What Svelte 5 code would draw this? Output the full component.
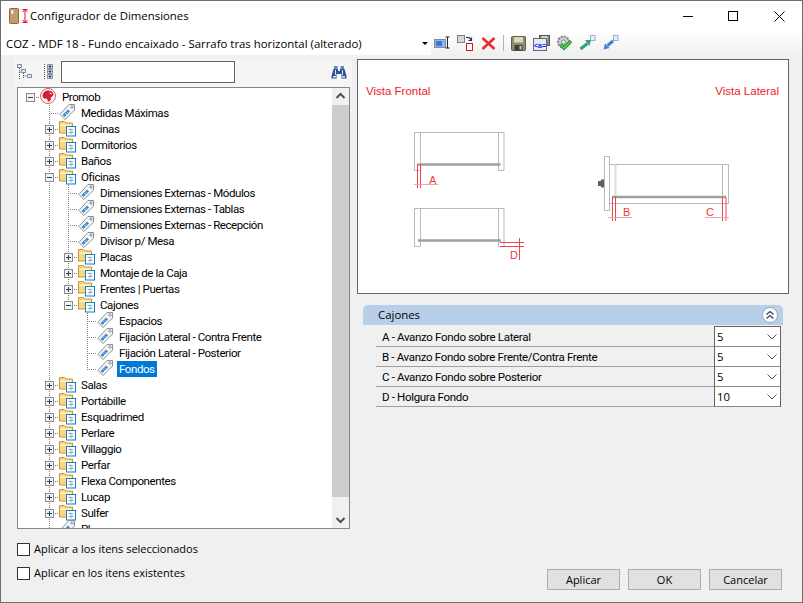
<script lang="ts">
  type Node = { label: string; kind: 'root' | 'folder' | 'tag'; open?: boolean; selected?: boolean; children?: Node[] };
  type Row = Node & { depth: number; guides: boolean[]; last: boolean; expandable: boolean };

  const folder = (label: string): Node => ({ label, kind: 'folder' });
  const tag = (label: string, selected = false): Node => ({ label, kind: 'tag', selected });

  const tree: Node = {
    label: 'Promob',
    kind: 'root',
    open: true,
    children: [
      tag('Medidas Máximas'),
      folder('Cocinas'),
      folder('Dormitorios'),
      folder('Baños'),
      {
        label: 'Oficinas',
        kind: 'folder',
        open: true,
        children: [
          tag('Dimensiones Externas - Módulos'),
          tag('Dimensiones Externas - Tablas'),
          tag('Dimensiones Externas - Recepción'),
          tag('Divisor p/ Mesa'),
          folder('Placas'),
          folder('Montaje de la Caja'),
          folder('Frentes | Puertas'),
          {
            label: 'Cajones',
            kind: 'folder',
            open: true,
            children: [
              tag('Espacios'),
              tag('Fijación Lateral - Contra Frente'),
              tag('Fijación Lateral - Posterior'),
              tag('Fondos', true)
            ]
          }
        ]
      },
      folder('Salas'),
      folder('Portábille'),
      folder('Esquadrimed'),
      folder('Perlare'),
      folder('Villaggio'),
      folder('Perfar'),
      folder('Flexa Componentes'),
      folder('Lucap'),
      folder('Sulfer'),
      tag('Pl'),
      folder('')
    ]
  };

  function flatten(node: Node, depth: number, guides: boolean[], last: boolean): Row[] {
    const row: Row = { ...node, depth, guides, last, expandable: node.kind !== 'tag' };
    const kids = node.open ? node.children ?? [] : [];
    const next = depth === 0 ? [] : [...guides, !last];
    const childGuides = depth === 0 ? [false] : next;
    return [row, ...kids.flatMap((c, i) => flatten(c, depth + 1, childGuides, i === kids.length - 1))];
  }

  // the empty last node only keeps the guide line running past the clipped row
  const rows = flatten(tree, 0, [], true).filter((r) => r.label);

  const params = [
    { label: 'A - Avanzo Fondo sobre Lateral', value: '5' },
    { label: 'B - Avanzo Fondo sobre Frente/Contra Frente', value: '5' },
    { label: 'C - Avanzo Fondo sobre Posterior', value: '5' },
    { label: 'D - Holgura Fondo', value: '10' }
  ];
</script>

{#snippet folderIcon()}
  <svg class="node-icon" width="17" height="17" viewBox="0 0 17 17">
    <path d="M.5 1.500h5l1.500 1.500h6.500v10H.5z" fill="#f9d684" stroke="#c8963f" />
    <path d="M1.500 4.500h11v1.500h-11z" fill="#fff3d2" />
    <rect x="7.500" y="6.500" width="9" height="9.500" fill="#fff" stroke="#1a7cb8" />
    <path d="M9.500 9.500h5M9.500 12.500h5M12 8.500v6" stroke="#7fb6da" fill="none" />
    <path d="M9.500 8.500h1v1h-1zM13 11h1v1h-1z" fill="#b6d6ec" />
  </svg>
{/snippet}

{#snippet tagIcon()}
  <svg class="node-icon" width="17" height="17" viewBox="0 0 17 17">
    <path d="M10 .5h5.500V6L6 15.500.9 10.400z" fill="#f6f6f6" stroke="#8f8f8f" />
    <circle cx="13" cy="3" r="1.200" fill="#fff" stroke="#8f8f8f" />
    <path d="M9 5.500l2 2-5.500 5.500-2-2z" fill="#3b86d4" />
    <path d="M6 9l2 2M7.500 7.500l2 2" stroke="#b4d6f4" fill="none" />
  </svg>
{/snippet}

{#snippet rootIcon()}
  <svg class="node-icon" width="17" height="17" viewBox="0 0 17 17">
    <circle cx="8" cy="8" r="7.500" fill="#fff" stroke="#de5560" />
    <path d="M2.500 8c0-3.500 2.500-5.500 5.500-5.500 3 0 5 1.500 5.500 4-.5 2-2 2.500-2.500 2.500 0 2-.5 3.500-1.500 4.500H7.500c.5-2-.5-3-2-3C4 10.500 2.500 10 2.500 8z" fill="#cf2233" />
    <path d="M9.500 5l2 1" stroke="#fff" fill="none" />
  </svg>
{/snippet}

<div class="window">
  <header class="titlebar">
    <svg class="app-icon" width="24" height="18" viewBox="0 0 24 18">
      <rect x=".5" y="1.500" width="9" height="15" rx="1" fill="#c49a6c" stroke="#8a6a44" />
      <rect x="2" y="3" width="2.500" height="4" fill="#efe2cf" />
      <path d="M13.500 2.500h5M16 2.500v13M13.500 15.500h5M13.500 5l2.500-2.500L18.500 5M13.500 13l2.500 2.500 2.500-2.500" stroke="#e0102a" fill="none" />
    </svg>
    <span class="title">Configurador de Dimensiones</span>
    <div class="window-btns">
      <svg width="11" height="11" viewBox="0 0 11 11"><path d="M1 5.500h10" stroke="#000" /></svg>
      <svg width="11" height="11" viewBox="0 0 11 11"><rect x=".5" y=".5" width="9" height="9" fill="none" stroke="#000" /></svg>
      <svg width="11" height="11" viewBox="0 0 11 11"><path d="M.5.500l10 10M10.500.500l-10 10" stroke="#000" fill="none" /></svg>
    </div>
  </header>

  <div class="toolbar">
    <div class="combo">
      <span>COZ - MDF 18 - Fundo encaixado - Sarrafo tras horizontal (alterado)</span>
      <i class="combo-arrow"></i>
    </div>
    <button class="tool" aria-label="Renombrar">
      <svg width="17" height="14" viewBox="0 0 17 14">
        <rect x=".5" y="3.500" width="11" height="8" fill="#8fb4ee" stroke="#7d8a9c" />
        <path d="M2 5h6v5H2z" fill="#3f74dc" />
        <path d="M11.500 1h4M13.500 1v11M11.500 12h4" stroke="#222" fill="none" />
      </svg>
    </button>
    <button class="tool" aria-label="Sustituir">
      <svg width="17" height="16" viewBox="0 0 17 16">
        <rect x=".5" y=".5" width="7" height="7" fill="#d8d8d8" stroke="#7f7f7f" />
        <rect x="9.500" y="8.500" width="6" height="7" fill="#fff" stroke="#e01020" />
        <path d="M9 2.500h3l2 2M14.500 2.500v3h-3" stroke="#14306e" fill="none" stroke-width="1.200" />
      </svg>
    </button>
    <button class="tool" aria-label="Eliminar">
      <svg width="15" height="13" viewBox="0 0 15 13">
        <path d="M1.500 1l12 11M13.500 1l-12 11" stroke="#ee2a30" stroke-width="2.600" fill="none" />
      </svg>
    </button>
    <span class="tool-sep"></span>
    <button class="tool" aria-label="Guardar">
      <svg width="15" height="15" viewBox="0 0 15 15">
        <rect x=".5" y=".5" width="14" height="14" rx="1" fill="#8d8d68" stroke="#5c5c50" />
        <rect x="3" y="1" width="9" height="5.500" fill="#d8d8c0" />
        <rect x="3.500" y="9" width="8" height="5.500" fill="#3e3e3e" />
        <rect x="8.500" y="10" width="2" height="3.500" fill="#c8c8c8" />
      </svg>
    </button>
    <button class="tool" aria-label="Guardar como">
      <svg width="17" height="16" viewBox="0 0 17 16">
        <rect x="6.500" y=".5" width="10" height="10" fill="#8a8a80" stroke="#55554e" />
        <rect x="8.500" y="1" width="6" height="3.500" fill="#d8d8c8" />
        <rect x=".5" y="3.500" width="13" height="12" fill="#e6ecf6" stroke="#5c6a80" />
        <text class="mini" x="1" y="13">&lt;a=</text>
      </svg>
    </button>
    <button class="tool" aria-label="Validar">
      <svg width="17" height="16" viewBox="0 0 17 16">
        <circle cx="7.500" cy="7" r="5.500" fill="#d0d0d0" stroke="#8a8a8a" stroke-width="2" stroke-dasharray="2.200 1" />
        <circle cx="7.500" cy="7" r="2" fill="#f0f0f0" stroke="#8a8a8a" />
        <path d="M4.500 9.500l3.500 3.500 7-7" stroke="#1d8a2e" stroke-width="3.400" fill="none" />
        <path d="M4.500 9.500l3.500 3.500 7-7" stroke="#58d058" stroke-width="1.600" fill="none" />
      </svg>
    </button>
    <button class="tool" aria-label="Exportar">
      <svg width="17" height="16" viewBox="0 0 17 16">
        <rect x="11.500" y=".5" width="4.500" height="5" fill="#e8f0fb" stroke="#8fb0dc" />
        <path d="M1.500 14l7-5.500" stroke="#35a07a" stroke-width="3" />
        <path d="M6 5h6l-1.500 6z" fill="#35a07a" />
      </svg>
    </button>
    <button class="tool" aria-label="Importar">
      <svg width="17" height="16" viewBox="0 0 17 16">
        <rect x="11.500" y=".5" width="4.500" height="5" fill="#e8f0fb" stroke="#8fb0dc" />
        <path d="M11 6l-5.500 4.500" stroke="#3c80d8" stroke-width="3" />
        <path d="M1.500 14.500l1.500-6 4.500 4.500z" fill="#3c80d8" />
      </svg>
    </button>
  </div>

  <div class="content">
    <aside class="left">
      <div class="tree-tools">
        <svg class="tt-a" width="16" height="16" viewBox="0 0 16 16">
          <path d="M2.500 4v12M2.500 8H6M6.500 9v6M6.500 12H10" stroke="#555" stroke-dasharray="1 1" fill="none" />
          <rect x=".5" y=".5" width="4" height="3" fill="#e8e8e8" stroke="#8090a8" />
          <rect x="4.500" y="5.500" width="4" height="3" fill="#e8e8e8" stroke="#8090a8" />
          <rect x="10.500" y="10.500" width="4" height="3" fill="#e8e8e8" stroke="#8090a8" />
        </svg>
        <svg class="tt-b" width="11" height="16" viewBox="0 0 11 16">
          <path d="M1.500 0v16" stroke="#555" stroke-dasharray="1 1" fill="none" />
          <path d="M4.500.5h5v4h-5zM4.500 5.500h5v4h-5zM4.500 10.500h5v4h-5z" fill="#e8e8e8" stroke="#8090a8" />
          <path d="M5.500 2.500h3M7 1v3M5.500 7.500h3M7 6v3M5.500 12.500h3M7 11v3" stroke="#304060" fill="none" />
        </svg>
        <input class="search" type="text" aria-label="Buscar" />
        <svg class="binoculars" width="16" height="14" viewBox="0 0 16 14">
          <path d="M3 1h3.500v3H3zM9.500 1H13v3H9.500z" fill="#6a88bc" />
          <path d="M2.500 4h4.500v2h2V4h4.500l2 7v2.500H10.500V9h-5v4.500H.5V11z" fill="#2f5296" />
          <path d="M2 11h3v1.500H2zM11 11h3v1.500h-3zM4 5h1v5H4zM11 5h1v5h-1z" fill="#d8e6f9" />
        </svg>
      </div>

      <div class="tree">
        <div class="tree-rows">
          {#each rows as row}
            <div class="row">
              {#each row.guides as on}
                <span class="cell" class:v={on}></span>
              {/each}
              <span class="cell h" class:v={row.depth > 0} class:half={row.last}>
                {#if row.expandable}
                  <svg class="expander" width="9" height="9" viewBox="0 0 9 9">
                    <rect x=".5" y=".5" width="8" height="8" fill="#f2f2f2" stroke="#8a8a8a" />
                    <path d={row.open ? 'M2 4.500h5' : 'M2 4.500h5M4.500 2v5'} stroke="#2e3f6e" fill="none" />
                  </svg>
                {/if}
              </span>
              {#if row.kind === 'root'}
                {@render rootIcon()}
              {:else if row.kind === 'folder'}
                {@render folderIcon()}
              {:else}
                {@render tagIcon()}
              {/if}
              <span class="label" class:selected={row.selected}>{row.label}</span>
            </div>
          {/each}
        </div>
        <div class="scrollbar">
          <svg class="sb-btn" width="17" height="17" viewBox="0 0 17 17"><path d="M4.500 10l4-4 4 4" stroke="#505050" stroke-width="2" fill="none" /></svg>
          <div class="sb-thumb"></div>
          <div class="sb-track"></div>
          <svg class="sb-btn" width="17" height="17" viewBox="0 0 17 17"><path d="M4.500 7l4 4 4-4" stroke="#505050" stroke-width="2" fill="none" /></svg>
        </div>
      </div>

      <div class="checks">
        <label class="check"><span class="box"></span>Aplicar a los itens seleccionados</label>
        <label class="check"><span class="box"></span>Aplicar en los itens existentes</label>
      </div>
    </aside>

    <main class="right">
      <div class="preview">
        <svg width="430" height="232" viewBox="358 60 430 232" class="drawing">
          <text class="vista" x="366" y="95">Vista Frontal</text>
          <text class="vista" x="779" y="95" text-anchor="end">Vista Lateral</text>

          <g class="gray">
            <path d="M414.500 132.500h89.500v38h-5.500v-7M414.500 132.500v38h6v-38M498.500 132.500v31" />
            <path d="M414.500 208.500h89.500v38h-5.500v-7M414.500 208.500v38h6v-38M498.500 208.500v31" />
            <path d="M604.500 156.500h5v54h-5zM609.500 164.500h119v39h-119M722.500 164.500v39" />
            <path d="M615.500 164.500v32" class="pale" />
          </g>
          <g class="shelf">
            <path d="M417.500 164.500h83M418 240.500h83M612 197h114" />
          </g>
          <path d="M598 181h3v-1.500h3v8h-3V186h-3z" fill="#5e5e5e" />
          <g class="dim">
            <path d="M417.500 164v24M420.500 164v24M500 242.500h24M500 246.500h24M519.500 238v22" />
            <path d="M612.500 197v24M615.500 197v24M722.500 197v24M726 197v24" />
            <path d="M414 184.500h24M608 217.500h24M705 217.500h24" class="pink" />
          </g>
          <text class="dim-label" x="429" y="184">A</text>
          <text class="dim-label" x="510" y="259">D</text>
          <text class="dim-label" x="623" y="216">B</text>
          <text class="dim-label" x="706" y="216">C</text>
        </svg>
      </div>

      <section class="panel">
        <div class="panel-head">
          <span class="panel-title">Cajones</span>
          <svg class="collapse" width="18" height="18" viewBox="0 0 18 18">
            <circle cx="9" cy="9" r="7.500" fill="#fff" stroke="#9aa8ba" />
            <path d="M5.500 8.500L9 5.500l3.500 3M5.500 12.500L9 9.500l3.500 3" stroke="#27406e" stroke-width="1.300" fill="none" />
          </svg>
        </div>
        <div class="param-grid">
          <div class="param-labels">
            {#each params as p}
              <div class="param-label">{p.label}</div>
            {/each}
          </div>
          <div class="param-values">
            {#each params as p}
              <div class="param-value">
                <span>{p.value}</span>
                <svg width="10" height="6" viewBox="0 0 10 6"><path d="M.5.500L5 5 9.500.500" stroke="#555" fill="none" /></svg>
              </div>
            {/each}
          </div>
        </div>
      </section>

      <div class="buttons">
        <button class="btn">Aplicar</button>
        <button class="btn">OK</button>
        <button class="btn">Cancelar</button>
      </div>
    </main>
  </div>
</div>

<style>
  :global(body) {
    margin: 0;
  }

  .window {
    width: 803px;
    height: 603px;
    box-sizing: border-box;
    border: 1px solid #6e6e6e;
    background: #f0f0f0;
    display: flex;
    flex-direction: column;
    font-family: "Open Sans", sans-serif;
    font-size: 11.4px;
    color: #000;
    overflow: hidden;
  }

  .titlebar {
    height: 30px;
    flex: none;
    background: #fff;
    display: flex;
    align-items: center;
    padding-left: 8px;
  }

  .app-icon {
    margin-right: -3px;
  }

  .title {
    margin-top: -2px;
  }

  .window-btns {
    margin-left: auto;
    display: flex;
    gap: 35px;
    margin-right: 17px;
  }

  .toolbar {
    height: 24px;
    flex: none;
    display: flex;
    align-items: center;
    background: linear-gradient(#ffffff, #f0f0f0);
  }

  .combo {
    width: 430px;
    height: 24px;
    flex: none;
    box-sizing: border-box;
    display: flex;
    align-items: center;
    background: #fff;
    padding-left: 5px;
  }

  .combo-arrow {
    margin-left: auto;
    margin-right: 3px;
    width: 0;
    height: 0;
    border-left: 3px solid transparent;
    border-right: 3px solid transparent;
    border-top: 3px solid #000;
  }

  .tool {
    width: 23px;
    height: 24px;
    flex: none;
    padding: 0;
    border: 0;
    background: none;
    display: flex;
    align-items: center;
    justify-content: center;
  }

  .tool-sep {
    width: 1px;
    height: 16px;
    margin: 0 3px;
    background: #b4b4b4;
  }

  .mini {
    font-family: "Liberation Sans", sans-serif;
    font-size: 7px;
    font-weight: bold;
    fill: #1020e0;
  }

  .content {
    flex: 1;
    min-height: 0;
    display: flex;
    padding-left: 13px;
  }

  .left {
    width: 338px;
    flex: none;
    display: flex;
    flex-direction: column;
  }

  .tree-tools {
    height: 28px;
    margin-top: 4px;
    flex: none;
    display: flex;
    align-items: center;
    padding: 0 5px 2px 3px;
    box-sizing: border-box;
    background: #f5f5f5;
  }

  .tt-b {
    margin-left: 10px;
  }

  .search {
    width: 174px;
    height: 22px;
    box-sizing: border-box;
    margin: 0 0 0 7px;
    padding: 0;
    border: 1px solid #646464;
    background: #fff;
  }

  .binoculars {
    margin-left: auto;
  }

  .tree {
    width: 333px;
    height: 442px;
    flex: none;
    box-sizing: border-box;
    margin-left: 3px;
    border: 1px solid #828790;
    background: #fff;
    display: flex;
    overflow: hidden;
  }

  .tree-rows {
    flex: 1;
    min-width: 0;
    padding: 1px 0 0 3px;
    font-family: "Roboto", sans-serif;
    font-size: 11.5px;
    letter-spacing: -0.42px;
  }

  .row {
    height: 16px;
    display: flex;
    align-items: flex-start;
    white-space: nowrap;
  }

  .cell {
    width: 19px;
    height: 16px;
    flex: none;
    display: flex;
    align-items: center;
    --dots-v: repeating-linear-gradient(to bottom, #808080 0 1px, transparent 1px 2px);
    --dots-h: repeating-linear-gradient(to right, #808080 0 1px, transparent 1px 2px);
    background-image: var(--line-v, none), var(--line-h, none);
    background-size: 1px var(--line-len, 100%), 10px 1px;
    background-position: 9px 0, 9px 8px;
    background-repeat: no-repeat;
  }

  .cell.v {
    --line-v: var(--dots-v);
  }

  .cell.half {
    --line-len: 8px;
  }

  .cell.h {
    --line-h: var(--dots-h);
  }

  .expander {
    margin-left: 5px;
  }

  .node-icon {
    width: 17px;
    height: 17px;
    flex: none;
    overflow: visible;
    margin-top: -1px;
    margin-right: 3px;
  }

  .label {
    height: 16px;
    line-height: 16px;
    padding: 0 2px;
    color: #000;
  }

  .label.selected {
    background: #0078d7;
    color: #fff;
  }

  .scrollbar {
    width: 17px;
    flex: none;
    background: #f0f0f0;
    display: flex;
    flex-direction: column;
  }

  .sb-btn {
    flex: none;
  }

  .sb-thumb {
    height: 392px;
    flex: none;
    background: #cdcdcd;
  }

  .sb-track {
    flex: 1;
  }

  .checks {
    display: flex;
    flex-direction: column;
    gap: 10px;
    margin: 13px 0 0 3px;
    font-size: 11px;
  }

  .check {
    display: flex;
    align-items: center;
    gap: 4px;
    height: 14px;
    line-height: 12px;
  }

  .box {
    width: 13px;
    height: 13px;
    border: 1px solid #333;
    box-sizing: border-box;
    background: #fff;
  }

  .right {
    width: 432px;
    flex: none;
    margin-left: 5px;
    display: flex;
    flex-direction: column;
  }

  .preview {
    height: 235px;
    margin-top: 4px;
    flex: none;
    box-sizing: border-box;
    border: 1px solid #646464;
    background: #fff;
  }

  .drawing {
    display: block;
  }

  .vista {
    font-family: "Liberation Sans", sans-serif;
    font-size: 11.5px;
    fill: #ee1c25;
  }

  .gray path {
    fill: none;
    stroke: #b9b9b9;
  }

  .gray .pale {
    stroke: #dcdcdc;
    stroke-width: 2;
  }

  .shelf path {
    fill: none;
    stroke: #a0a0a0;
    stroke-width: 2.500;
  }

  .dim path {
    fill: none;
    stroke: #f0444c;
  }

  .dim .pink {
    stroke: #f5a0a4;
  }

  .dim-label {
    font-family: "Liberation Sans", sans-serif;
    font-size: 11px;
    fill: #ee3a42;
  }

  .panel {
    margin: 11px 6px 0 6px;
  }

  .panel-head {
    height: 20px;
    background: #b8cfe9;
    border-radius: 5px 5px 0 0;
    display: flex;
    align-items: center;
    justify-content: space-between;
    padding: 0 4px 0 15px;
  }

  .panel-title {
    margin-top: -2px;
  }

  .param-grid {
    display: flex;
    margin: 1px 0 0 13px;
    width: 405px;
  }

  .param-labels {
    flex: 1;
    min-width: 0;
    padding-top: 1px;
    font-family: "Roboto", sans-serif;
    font-size: 11.5px;
    letter-spacing: -0.33px;
  }

  .param-label {
    height: 20px;
    box-sizing: border-box;
    padding-left: 6px;
    line-height: 20px;
    border-bottom: 1px solid #a0a0a0;
  }

  .param-values {
    width: 67px;
    flex: none;
    box-sizing: border-box;
    border: 1px solid #646464;
    border-bottom-width: 0;
    background: #fff;
  }

  .param-value {
    height: 20px;
    box-sizing: border-box;
    display: flex;
    align-items: center;
    justify-content: space-between;
    padding: 0 3px 0 2px;
    border-bottom: 1px solid #8a8a8a;
  }

  .buttons {
    margin-top: auto;
    margin-bottom: 12px;
    display: flex;
    justify-content: flex-end;
    gap: 8px;
    padding-right: 7px;
  }

  .btn {
    width: 73px;
    height: 21px;
    box-sizing: border-box;
    padding: 0;
    border: 1px solid #adadad;
    background: #e1e1e1;
    font: inherit;
    font-size: 11px;
    color: #000;
  }
</style>
